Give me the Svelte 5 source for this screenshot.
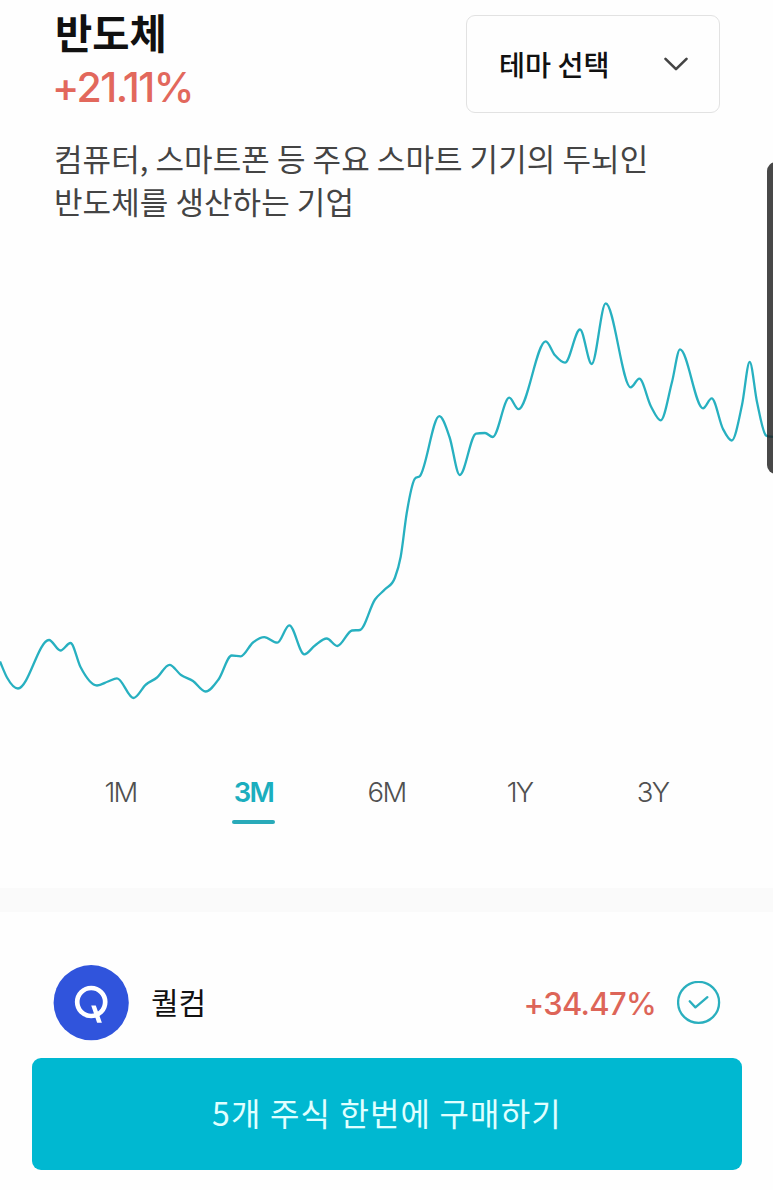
<script>
  const chartTop = 280;
  const points = [
    [0, 661.5], [7, 677.5], [18, 688.5], [49, 640], [60.5, 650.5], [70.5, 643],
    [80.5, 667], [97, 685.5], [108, 681.5], [117, 678.3], [133.5, 698],
    [146, 684.5], [157, 677.5], [169.5, 664.8], [181, 675], [193, 681], [205.5, 691.5], [218.5, 679.5],
    [231.7, 655.5], [240.7, 656.3], [253, 642.5], [264.3, 637.2], [277.3, 642.7], [289.3, 625.3],
    [304.3, 654.3], [315, 645.5], [326.7, 638.5], [337.3, 646], [352, 630.5],
    [360, 630], [375, 599.5], [385, 589.3], [395, 577.5], [400.7, 556.7], [406.7, 513.3],
    [414.5, 479.3], [420, 476], [439.3, 416.2], [449.5, 437], [459.7, 475],
    [476, 433.6], [485, 433], [492.7, 437], [509.2, 397.7], [518.5, 409.2],
    [545.7, 341.4], [555, 355.3], [565, 362.7], [580, 329.5], [591.7, 364],
    [605.7, 303.4], [630.7, 387.3], [639.3, 378.7], [651, 406.5], [660.7, 420.3],
    [672, 382], [680, 349.4], [703, 408.3],
    [711.7, 398.4], [723, 429], [731.7, 440.5], [742, 405], [749.7, 362],
    [757, 402], [766, 435.5], [773, 437]
  ];

  // Cubic interpolation with limited tangents: peaks and troughs stay on the data points.
  function smoothPath(pts) {
    const n = pts.length;
    const h = [];
    const s = [];
    for (let i = 0; i < n - 1; i++) {
      h.push(pts[i + 1][0] - pts[i][0]);
      s.push((pts[i + 1][1] - pts[i][1]) / h[i]);
    }
    const t = pts.map((_, i) => {
      if (i === 0) return s[0];
      if (i === n - 1) return s[n - 2];
      if (s[i - 1] * s[i] <= 0) return 0;
      const mean = (s[i - 1] * h[i] + s[i] * h[i - 1]) / (h[i - 1] + h[i]);
      const limit = 3 * Math.min(Math.abs(s[i - 1]), Math.abs(s[i]));
      return Math.sign(mean) * Math.min(Math.abs(mean), limit);
    });
    let d = `M${pts[0][0]},${pts[0][1] - chartTop}`;
    for (let i = 0; i < n - 1; i++) {
      const [x0, y0] = pts[i];
      const [x1, y1] = pts[i + 1];
      const k = h[i] / 3;
      d += `C${x0 + k},${y0 + t[i] * k - chartTop} ${x1 - k},${y1 - t[i + 1] * k - chartTop} ${x1},${y1 - chartTop}`;
    }
    return d;
  }

  const line = smoothPath(points);
  const periods = ['1M', '3M', '6M', '1Y', '3Y'];
  let selected = $state('3M');
</script>

<main>
  <header>
    <div class="heading">
      <h1>반도체</h1>
      <div class="rate">+21.11%</div>
    </div>
    <button class="select">
      <span>테마 선택</span>
      <svg width="24" height="14" viewBox="0 0 24 14"><path d="M1.5 1.8 12 12.2 22.5 1.8" /></svg>
    </button>
  </header>

  <p class="description">컴퓨터, 스마트폰 등 주요 스마트 기기의 두뇌인<br />반도체를 생산하는 기업</p>

  <svg class="chart" width="773" height="440" viewBox="0 0 773 440"><path d={line} /></svg>

  <nav>
    {#each periods as period}
      <button class:active={selected === period} onclick={() => (selected = period)}>
        <span>{period}</span>
      </button>
    {/each}
  </nav>

  <div class="divider"></div>

  <section class="stock">
    <svg class="logo" width="76" height="76" viewBox="0 0 76 76">
      <circle cx="38.2" cy="37.7" r="37.6" fill="#3054dc" />
      <circle cx="38.2" cy="37" r="14" />
      <path d="M38.2 40.4h4.6l6.1 17.4h-4.8l-1.5-4.6z" fill="#fff" />
    </svg>
    <span class="name">퀄컴</span>
    <span class="gain">+34.47%</span>
    <svg class="check" width="44" height="44" viewBox="0 0 44 44">
      <circle cx="21.6" cy="21.4" r="20.5" />
      <path d="m12.7 20.3 5.7 6.1 12-10.2" />
    </svg>
  </section>

  <button class="buy"><span>5개 주식 한번에 구매하기</span></button>

  <div class="edge-handle"></div>
</main>

<style>
  :global(body) {
    margin: 0;
    background: #fefefe;
  }

  main {
    position: relative;
    display: flex;
    flex-direction: column;
    box-sizing: border-box;
    width: 773px;
    height: 1190px;
    overflow: hidden;
    background: #fefefe;
    color: #111;
    font-family: 'Noto Sans CJK KR', sans-serif;
  }

  button {
    padding: 0;
    border: 0;
    background: none;
    color: inherit;
    font: inherit;
    white-space: nowrap;
  }

  header {
    display: flex;
    justify-content: space-between;
    height: 136px;
    padding: 0 53px 0 55px;
  }

  h1 {
    margin: 0;
    height: 65px;
    font-size: 40.5px;
    font-weight: 700;
    line-height: 64px;
  }

  .rate {
    height: 44px;
    margin-left: -3px;
    color: #e2685c;
    font-family: Inter, sans-serif;
    font-size: 41px;
    font-weight: 500;
    line-height: 44px;
    letter-spacing: -1.6px;
  }

  .select {
    display: flex;
    align-items: center;
    justify-content: space-between;
    box-sizing: border-box;
    width: 254px;
    height: 98px;
    margin-top: 15px;
    padding: 0 31px 0 32px;
    border: 1.5px solid #e2e2e2;
    border-radius: 9px;
    font-size: 28.3px;
    font-weight: 500;
  }

  .select span {
    padding-bottom: 2px;
  }

  .select svg path {
    fill: none;
    stroke: #444;
    stroke-width: 2.6;
    stroke-linecap: round;
    stroke-linejoin: round;
  }

  .description {
    height: 144px;
    margin: 0;
    padding-left: 54px;
    color: #444;
    font-size: 31px;
    line-height: 43px;
    letter-spacing: 0.08px;
    white-space: nowrap;
  }

  .chart {
    display: block;
    flex: none;
  }

  .chart path {
    fill: none;
    stroke: #27b0c0;
    stroke-width: 2.3;
    stroke-linejoin: round;
  }

  nav {
    display: grid;
    grid-template-columns: repeat(5, 133px);
    height: 168px;
    padding: 51px 0 0 54px;
    box-sizing: border-box;
  }

  nav button {
    display: flex;
    align-items: flex-start;
    justify-content: center;
    height: 54px;
    color: #505050;
    font-family: Inter, sans-serif;
    font-size: 27.5px;
    font-weight: 300;
    line-height: 42px;
    letter-spacing: -1.7px;
  }

  nav span {
    display: flex;
    flex-direction: column;
    min-width: 43px;
    height: 53px;
    text-align: center;
  }

  nav .active {
    color: #1baebe;
    font-weight: 600;
  }

  nav .active span::after {
    content: '';
    height: 4px;
    margin-top: 7px;
    border-radius: 2px;
    background: #29aab9;
  }

  .divider {
    flex: none;
    height: 24px;
    background: #fafafa;
  }

  .stock {
    display: flex;
    align-items: center;
    height: 76px;
    margin-top: 53px;
    padding: 0 52px 0 53px;
  }

  .logo circle:nth-child(2) {
    fill: none;
    stroke: #fff;
    stroke-width: 4.7;
  }

  .name {
    margin-left: 22px;
    padding-bottom: 4px;
    font-size: 30px;
  }

  .gain {
    margin-left: auto;
    color: #dd6558;
    font-family: Inter, sans-serif;
    font-size: 31px;
    font-weight: 500;
    letter-spacing: -0.7px;
  }

  .check {
    margin-left: 21px;
    fill: none;
    stroke: #2aafbe;
    stroke-width: 2.3;
    stroke-linecap: round;
    stroke-linejoin: round;
  }

  .buy {
    height: 112px;
    margin: 17px 31px 0 32px;
    border-radius: 9px;
    background: #00b8d1;
    color: #e0ffff;
    font-size: 32px;
    letter-spacing: 1.15px;
  }

  .buy span {
    display: block;
    padding-bottom: 4px;
  }

  .edge-handle {
    position: absolute;
    top: 162px;
    right: -12px;
    width: 18px;
    height: 312px;
    border-radius: 9px;
    background: rgba(32, 32, 32, 0.82);
  }
</style>
